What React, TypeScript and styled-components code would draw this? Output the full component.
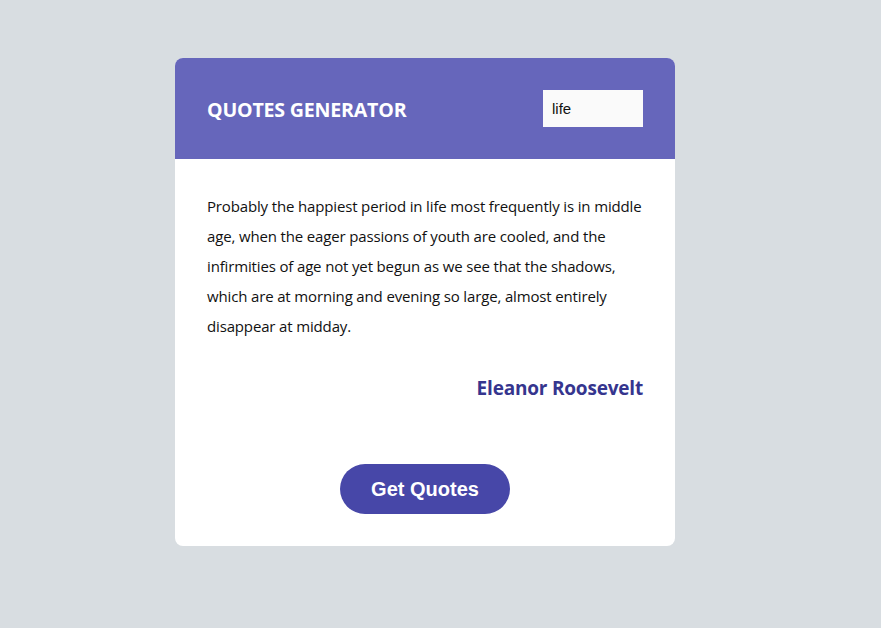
import React from "react";
import styled, { createGlobalStyle } from "styled-components";

const Global = createGlobalStyle`
  html, body { margin: 0; padding: 0; background: #d8dde1; }
  body { font-family: "Open Sans", "Noto Sans", sans-serif; }
`;

const Page = styled.div`
  min-height: 628px;
  padding: 58px 0 0 175px;
  box-sizing: border-box;
`;

const Card = styled.div`
  width: 500px;
  background: #ffffff;
  border-radius: 8px;
  overflow: hidden;
`;

const Header = styled.header`
  height: 101px;
  background: #6666bb;
  display: flex;
  align-items: center;
  justify-content: space-between;
  padding: 0 32px;
  box-sizing: border-box;
`;

const Title = styled.h1`
  margin: 0;
  color: #ffffff;
  font-size: 19.6px;
  font-weight: 700;
  letter-spacing: -0.2px;
  transform: translateY(1px);
`;

const Search = styled.input`
  width: 100px;
  height: 37px;
  box-sizing: border-box;
  border: none;
  outline: none;
  background: #fafafa;
  padding: 0 9px;
  font-family: "Liberation Sans", Arial, sans-serif;
  font-size: 15px;
  color: #111;
`;

const Body = styled.div`
  padding: 32px 32px 32px;
  display: flex;
  flex-direction: column;
`;

const Quote = styled.p`
  margin: 0;
  font-size: 15px;
  line-height: 30px;
  color: #111;
  letter-spacing: -0.15px;
`;

const Author = styled.p`
  margin: 34px 0 0;
  text-align: right;
  font-size: 19px;
  font-weight: 700;
  color: #35358e;
  letter-spacing: -0.2px;
`;

const Button = styled.button`
  align-self: center;
  margin-top: 63px;
  width: 170px;
  height: 50px;
  border: none;
  border-radius: 25px;
  background: #4747a8;
  color: #ffffff;
  font-family: "Liberation Sans", Arial, sans-serif;
  font-size: 20px;
  font-weight: 700;
  padding-top: 2px;
  cursor: pointer;
`;

export default function App() {
  return (
    <>
      <Global />
      <Page>
        <Card>
          <Header>
            <Title>QUOTES GENERATOR</Title>
            <Search defaultValue="life" />
          </Header>
          <Body>
            <Quote>
              Probably the happiest period in life most frequently is in middle
              age, when the eager passions of youth are cooled, and the
              infirmities of age not yet begun as we see that the shadows,
              which are at morning and evening so large, almost entirely
              disappear at midday.
            </Quote>
            <Author>Eleanor Roosevelt</Author>
            <Button>Get Quotes</Button>
          </Body>
        </Card>
      </Page>
    </>
  );
}
